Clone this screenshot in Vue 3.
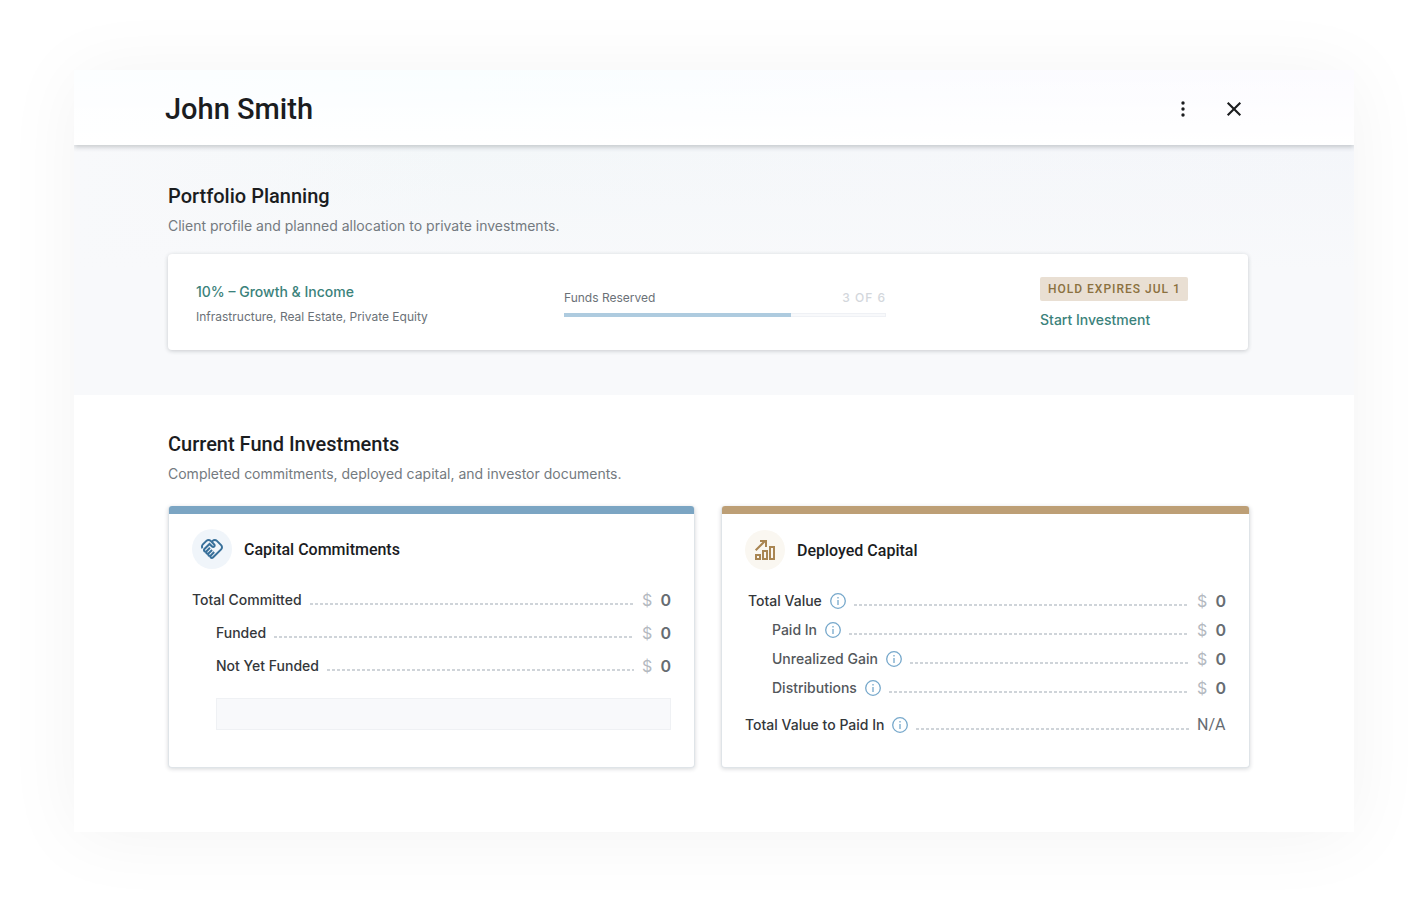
<script setup>
const client = 'John Smith'

const plan = {
  name: '10% – Growth & Income',
  detail: 'Infrastructure, Real Estate, Private Equity',
  reserved: '3 OF 6',
  percent: 71,
  hold: 'HOLD EXPIRES JUL 1',
}

const commitments = [
  { label: 'Total Committed', amount: '0' },
  { label: 'Funded', amount: '0', nested: true },
  { label: 'Not Yet Funded', amount: '0', nested: true },
]

const deployed = [
  { label: 'Total Value', amount: '0' },
  { label: 'Paid In', amount: '0', nested: true },
  { label: 'Unrealized Gain', amount: '0', nested: true },
  { label: 'Distributions', amount: '0', nested: true },
]
</script>

<template>
  <div class="page">
    <main class="panel">
      <header class="topbar">
        <h1>{{ client }}</h1>
        <div class="actions">
          <button type="button" aria-label="More options">
            <svg viewBox="0 0 24 24" width="24" height="24" fill="currentColor">
              <circle cx="12" cy="6" r="1.7" />
              <circle cx="12" cy="12" r="1.7" />
              <circle cx="12" cy="18" r="1.7" />
            </svg>
          </button>
          <button type="button" aria-label="Close">
            <svg viewBox="0 0 24 24" width="24" height="24" fill="none" stroke="currentColor" stroke-width="2.1">
              <path d="M5.7 5.7 18.3 18.3M18.3 5.7 5.7 18.3" />
            </svg>
          </button>
        </div>
      </header>

      <section class="planning">
        <h2>Portfolio Planning</h2>
        <p class="subtitle">Client profile and planned allocation to private investments.</p>
        <article class="plan">
          <div class="plan-info">
            <a href="#" class="link">{{ plan.name }}</a>
            <p>{{ plan.detail }}</p>
          </div>
          <div class="reserve">
            <div class="reserve-head">
              <span id="reserve-label">Funds Reserved</span>
              <span class="reserve-count">{{ plan.reserved }}</span>
            </div>
            <div
              class="track"
              role="progressbar"
              aria-labelledby="reserve-label"
              aria-valuemin="0"
              aria-valuemax="100"
              :aria-valuenow="plan.percent"
            >
              <div class="fill" :style="{ width: plan.percent + '%' }"></div>
            </div>
          </div>
          <div class="plan-status">
            <span class="badge">{{ plan.hold }}</span>
            <a href="#" class="link">Start Investment</a>
          </div>
        </article>
      </section>

      <section class="funds">
        <h2>Current Fund Investments</h2>
        <p class="subtitle">Completed commitments, deployed capital, and investor documents.</p>
        <div class="cards">
          <article class="card blue">
            <div class="card-head">
              <span class="medallion">
                <svg viewBox="0 0 24 24" width="24" height="24" fill="currentColor" aria-hidden="true">
                  <path d="M12.22 19.85c-.18.18-.5.21-.71 0-.18-.18-.21-.5 0-.71l3.39-3.39-1.41-1.41-3.39 3.39c-.19.2-.51.19-.71 0-.21-.21-.18-.53 0-.71l3.39-3.39-1.41-1.41-3.39 3.39c-.18.18-.5.21-.71 0-.19-.19-.19-.51 0-.71l3.39-3.39-1.42-1.41-3.39 3.39c-.18.18-.5.21-.71 0-.19-.2-.19-.51 0-.71L9.52 8.4l1.87 1.86c.95.95 2.59.94 3.54 0 .98-.98.98-2.56 0-3.54l-1.86-1.86.28-.28c.78-.78 2.05-.78 2.83 0l4.24 4.24c.78.78.78 2.05 0 2.83l-8.2 8.2zm9.61-6.78c1.56-1.56 1.56-4.09 0-5.66l-4.24-4.24c-1.56-1.56-4.09-1.56-5.66 0l-.28.28-.28-.28c-1.56-1.56-4.09-1.56-5.66 0L2.17 6.71c-1.42 1.42-1.55 3.63-.4 5.19l1.45-1.45c-.39-.75-.26-1.7.37-2.33l3.54-3.54c.78-.78 2.05-.78 2.83 0l3.56 3.56c.18.18.21.5 0 .71-.21.21-.53.18-.71 0L9.52 5.57l-5.8 5.79c-.98.97-.98 2.56 0 3.54.39.39.89.63 1.42.7.07.52.3 1.02.7 1.42.4.4.9.63 1.42.7.07.52.3 1.02.7 1.42.4.4.9.63 1.42.7.07.54.31 1.03.7 1.42.47.47 1.1.73 1.77.73.67 0 1.3-.26 1.77-.73l8.21-8.19z" />
                </svg>
              </span>
              <h3>Capital Commitments</h3>
            </div>
            <dl>
              <div v-for="row in commitments" :key="row.label" class="row" :class="{ nested: row.nested }">
                <dt>{{ row.label }}</dt>
                <span class="leader"></span>
                <dd><span class="currency">$</span><b>{{ row.amount }}</b></dd>
              </div>
            </dl>
            <div class="meter"></div>
          </article>

          <article class="card gold">
            <div class="card-head">
              <span class="medallion">
                <svg viewBox="0 0 24 24" width="24" height="24" fill="none" stroke="currentColor" stroke-width="2" aria-hidden="true">
                  <path d="M3 17h4v4H3zM10 13h4v8h-4zM17 9h4v12h-4z" />
                  <path d="M2.7 12.3 12 3M7 3h6v6" />
                </svg>
              </span>
              <h3>Deployed Capital</h3>
            </div>
            <dl class="group">
              <div v-for="row in deployed" :key="row.label" class="row" :class="{ nested: row.nested }">
                <dt>{{ row.label }}</dt>
                <button type="button" class="info" :aria-label="'About ' + row.label">
                  <svg viewBox="0 0 16 16" width="16" height="16" fill="none" stroke="currentColor">
                    <circle cx="8" cy="8" r="7.3" stroke-width="1.3" />
                    <path d="M8 7v5M8 4v1.5" stroke-width="1.3" />
                  </svg>
                </button>
                <span class="leader"></span>
                <dd><span class="currency">$</span><b>{{ row.amount }}</b></dd>
              </div>
            </dl>
            <dl class="ratio">
              <div class="row">
                <dt>Total Value to Paid In</dt>
                <button type="button" class="info" aria-label="About Total Value to Paid In">
                  <svg viewBox="0 0 16 16" width="16" height="16" fill="none" stroke="currentColor">
                    <circle cx="8" cy="8" r="7.3" stroke-width="1.3" />
                    <path d="M8 7v5M8 4v1.5" stroke-width="1.3" />
                  </svg>
                </button>
                <span class="leader"></span>
                <dd class="na">N/A</dd>
              </div>
            </dl>
          </article>
        </div>
      </section>
    </main>
  </div>
</template>

<style>
body {
  margin: 0;
  background: #fff;
}
</style>

<style scoped>
* {
  box-sizing: border-box;
}
h1, h2, h3, p, dl, dd {
  margin: 0;
}
.page {
  min-height: 100vh;
  padding: 70px 74px 78px;
  background: #fff;
  color: #1b1d1f;
  font-family: Inter, "Liberation Sans", sans-serif;
  overflow: hidden;
}
.panel {
  background: #fff;
  box-shadow: 0 4px 72px rgba(0, 0, 0, 0.05);
}
.topbar {
  position: relative;
  display: flex;
  align-items: center;
  justify-content: space-between;
  height: 75px;
  padding: 2px 100px 0 91px;
  background:
    linear-gradient(rgba(255, 255, 255, 0), #fff),
    linear-gradient(90deg, #fcfeff, #f9feff 30%, #fbfcff 65%, #fcfbff);
  box-shadow: 0 2px 5px rgba(30, 40, 50, 0.24);
  clip-path: inset(0 0 -12px 0);
}
h1, h2, h3, .badge {
  font-family: Roboto, "Liberation Sans", sans-serif;
}
h1 {
  font-size: 29px;
  line-height: 40px;
  font-weight: 500;
}
.actions {
  display: flex;
  gap: 11px;
}
.actions button {
  display: grid;
  place-items: center;
  width: 40px;
  height: 40px;
  padding: 0;
  border: 0;
  background: none;
  color: #1b1d1f;
}
.planning {
  padding: 37px 106px 45px 94px;
  background:
    linear-gradient(rgba(248, 249, 251, 0), #f8f9fb 50%),
    linear-gradient(90deg, #f8f9fb, #f3f7f9 30%, #f5f7fa 65%, #f4f6fa);
}
.funds {
  padding: 35px 104px 64px 94px;
}
h2 {
  font-size: 20px;
  line-height: 28px;
  font-weight: 500;
}
.subtitle {
  margin-top: 6px;
  font-size: 14px;
  line-height: 20px;
  color: #747a80;
}
.plan {
  display: grid;
  grid-template-columns: 368fr 322fr 334fr;
  align-items: center;
  height: 96px;
  margin-top: 18px;
  padding: 2px 28px 0;
  border-radius: 4px;
  background: #fff;
  box-shadow: 0 1px 4px rgba(30, 40, 50, 0.22);
}
.plan-info p {
  margin-top: 7px;
  font-size: 12px;
  line-height: 16px;
  color: #6b7177;
}
.link {
  display: block;
  font-size: 14px;
  line-height: 20px;
  font-weight: 500;
  color: #3b827b;
  text-decoration: none;
}
.reserve-head {
  display: flex;
  justify-content: space-between;
  font-size: 12px;
  line-height: 16px;
  color: #6b7177;
}
.reserve-count {
  font-weight: 500;
  letter-spacing: 1px;
  color: #d3d7dc;
}
.track {
  height: 4px;
  margin-top: 7px;
  border: 1px solid #eff1f5;
  background: #f8f9fb;
}
.fill {
  height: 4px;
  margin-top: -1px;
  margin-left: -1px;
  background: #aecbdf;
}
.plan-status {
  justify-self: end;
  width: 180px;
}
.badge {
  display: block;
  width: fit-content;
  padding: 0 7px 0 8px;
  margin-bottom: 9px;
  border-radius: 2px;
  background: #e9dfd3;
  color: #8b713f;
  font-size: 12px;
  line-height: 24px;
  font-weight: 500;
  letter-spacing: 1px;
  white-space: nowrap;
}
.cards {
  display: grid;
  grid-template-columns: 527fr 529fr;
  gap: 26px;
  margin-top: 22px;
}
.card {
  padding: 0 23px 37px;
  border: 1px solid #dfe4e8;
  border-top: 0;
  border-radius: 4px;
  background: #fff;
  box-shadow: 0 1px 4px rgba(30, 40, 50, 0.18);
}
.card.gold {
  padding-bottom: 28px;
}
.card::before {
  content: "";
  display: block;
  height: 8px;
  margin: 0 -23px 15px;
  border-radius: 3px 3px 0 0;
  background: #7ba5c3;
}
.card.gold::before {
  margin-bottom: 16px;
  background: #bd9f76;
}
.card-head {
  display: flex;
  align-items: center;
  gap: 12px;
  margin-bottom: 14px;
}
.gold .card-head {
  margin-bottom: 16px;
}
.medallion {
  display: grid;
  place-items: center;
  width: 40px;
  height: 40px;
  border-radius: 50%;
  background: #f0f5fa;
  color: #38709a;
}
.gold .medallion {
  background: #faf7f1;
  color: #a98552;
}
h3 {
  padding-top: 2px;
  font-size: 16px;
  line-height: 24px;
  font-weight: 500;
}
.row {
  display: flex;
  align-items: center;
  gap: 8px;
  height: 33px;
}
.gold .row {
  height: 29px;
}
.row.nested {
  padding-left: 24px;
}
.group {
  padding-left: 3px;
}
.ratio {
  margin-top: 8px;
}
dt {
  font-size: 14px;
  line-height: 20px;
  font-weight: 500;
  color: #34373a;
}
.group .nested dt {
  color: #53575b;
}
.info {
  display: block;
  width: 16px;
  height: 16px;
  padding: 0;
  border: 0;
  background: none;
  color: #76a8cb;
}
.info svg {
  display: block;
}
.leader {
  flex: 1;
  height: 2px;
  margin-top: 8px;
  background: repeating-linear-gradient(90deg, #cfd4d9 0 3px, transparent 3px 5px);
}
dd {
  display: flex;
  justify-content: space-between;
  width: 29px;
  font-size: 16px;
  line-height: 20px;
  color: #666c72;
}
dd b {
  font-weight: 600;
}
.currency {
  color: #b4b9bf;
}
.na {
  font-family: Roboto, "Liberation Sans", sans-serif;
}
.meter {
  height: 32px;
  margin: 16px 0 0 24px;
  border: 1px solid #eff1f4;
  background: #f8f9fb;
}
</style>
